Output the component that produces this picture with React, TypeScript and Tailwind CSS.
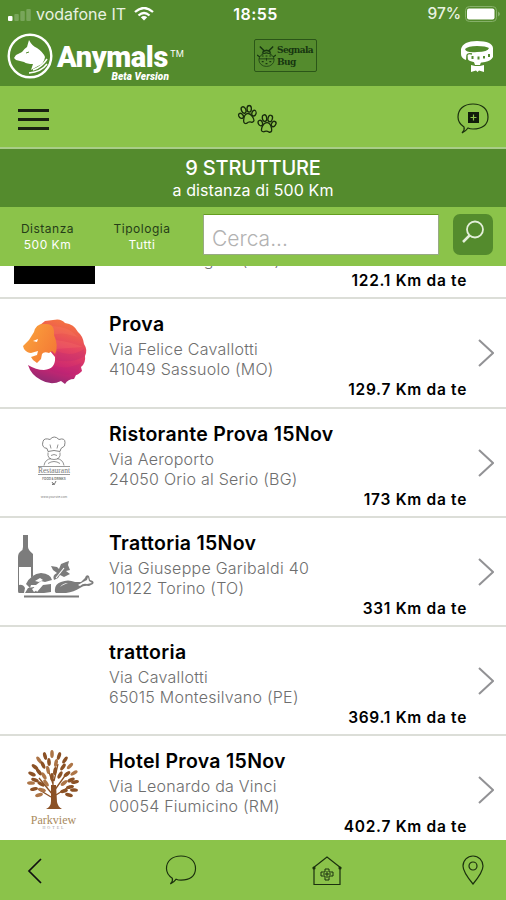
import React from "react";

type Place = {
	name: string;
	street: string;
	city: string;
	distance: string;
	thumb: React.ReactNode;
};

const LionLogo = () => (
	<svg viewBox="0 0 80 80" className="h-20 w-20">
		<defs>
			<linearGradient id="mane" x1="0.6" y1="0" x2="0.35" y2="1">
				<stop offset="0" stopColor="#f5743f" />
				<stop offset="0.4" stopColor="#e54462" />
				<stop offset="0.75" stopColor="#c92572" />
				<stop offset="1" stopColor="#8e2a72" />
			</linearGradient>
			<linearGradient id="face" x1="0" y1="0" x2="1" y2="0.6">
				<stop offset="0" stopColor="#fba63c" />
				<stop offset="1" stopColor="#f47b36" />
			</linearGradient>
		</defs>
		<path
			d="M26 12L31 8L39 7Q47 5 51 10Q60 11 64 19Q69 23 70 31Q74 37 71 43Q72 50 67 54L68 58Q64 62 62 62L60 66Q54 66 51 71L47 68Q37 73 27 67Q17 62 14 52Q22 57 30 57Q42 56 41 44L36 38Z"
			fill="url(#mane)"
		/>
		<path d="M43 38Q57 45 70 36L71 43Q58 51 42 47ZM41 53Q53 57 67 50L64 60Q50 64 36 57Z" fill="#a92478" opacity="0.2" />
		<path d="M38 13Q54 13 64 24L56 22Q48 19 38 22ZM42 27Q57 29 69 34Q55 35 42 36Z" fill="#ff896b" opacity="0.2" />
		<path
			d="M15 27L20 19Q22 10 31 11Q41 10 40 22Q45 33 41 41L38 38L35 40Q30 38 28 41L27 46L23 50L19 47L17 44L23 42L24 38L17 40Q13 40 10 36L9 33Z"
			fill="url(#face)"
		/>
		<path d="M19 28L24 26L23 29Z" fill="#fff" />
	</svg>
);

const ChefLogo = () => (
	<div className="flex h-20 w-20 flex-col items-center pt-[13px] text-[#777]">
		<svg viewBox="0 0 30 30" className="h-[31px] w-[30px] shrink-0" fill="none" stroke="currentColor">
			<path d="M8 12Q2 11 4 5Q5 1 11 3Q15 -2 20 3Q26 1 26 6Q27 10 22 12L21 15Q15 13 9 15Z" strokeWidth="0.9" />
			<path d="M11 8L12 12M19 8L18 12M9 16Q8 23 15 23Q22 23 21 16M12 19Q15 17 18 19M5 29Q6 23 12 22M25 29Q24 23 18 22M9 27Q15 23 21 27" strokeWidth="0.8" />
		</svg>
		<div className="-mt-px border-y border-[#999] font-['Liberation_Serif',serif] text-[7.5px] leading-[7px]">
			Restaurant
		</div>
		<div className="mt-[2px] whitespace-nowrap text-[3px] font-bold leading-[4px]">FOOD &amp; DRINKS</div>
		<svg viewBox="0 0 6 5" className="h-[5px] w-[6px]" fill="none" stroke="currentColor">
			<path d="M1 1L3 4L5 0M1 4L3 2" />
		</svg>
		<div className="mt-[9px] text-[3px] leading-[4px]">www.yoursite.com</div>
	</div>
);

const TrattoriaLogo = () => (
	<svg viewBox="0 0 80 80" className="h-20 w-20" fill="#7c7c7c">
		<path d="M9 3H14V15Q14 18 19 22V44L17 46V35H5V53Q9 52 11 56L10 61H5Q4 61 4 59V25Q4 21 7 19Q9 18 9 15Z" />
		<path d="M12 52Q17 42 27 41Q37 42 38 48L31 50L27 49L22 53L17 53L16 56ZM11 61L14 56L20 55L23 60L29 53L37 52V60L30 61H20Z" />
		<path d="M21 49L26 46L29 48L25 50ZM18 57L21 55L23 58L20 60Z" fill="#fff" />
		<path d="M40 48Q38 43 43 41L39 38L37 34L43 35L45 37L47 32L52 30L55 29L54 33L56 38L52 39L56 42L50 45L46 43L44 46Z" />
		<path d="M42 46L50 36" stroke="#fff" strokeWidth="1.2" />
		<path d="M41 60Q40 52 47 50Q54 47 61 50L67 50L71 46Q72 42 75 44L76 48Q81 49 79 52L75 54Q70 53 66 56Q60 60 52 61H42Z" />
		<path d="M69 50L73 48L74 45L75 49L78 51L73 52Q69 51 66 54L64 53ZM46 55Q49 51 54 51L49 53Z" fill="#fff" />
		<path d="M10 63.500H65V65.500H10Z" />
	</svg>
);

// leaves of the hotel tree, as [x, y, angle]
const leaves = [
	[38, 4, 0], [31, 6, -15], [45, 6, 18], [25, 10, -35], [51, 10, 35],
	[35, 12, -5], [42, 13, 12], [29, 15, -25], [49, 17, 35], [56, 16, 45],
	[21, 17, -50], [25, 22, -40], [34, 20, -10], [41, 21, 10], [53, 24, 50],
	[60, 23, 60], [18, 24, -65], [46, 25, 30], [30, 26, -30], [21, 30, -70],
	[57, 30, 65], [17, 33, -85], [61, 32, 80], [27, 34, -60], [50, 33, 50],
	[56, 37, 80], [20, 39, -100], [28, 40, -75], [60, 40, 95], [50, 41, 75],
	[25, 45, -105], [55, 45, 105], [38, 27, 0], [32, 33, -35],
];

const HotelLogo = () => (
	<div className="flex h-20 w-20 flex-col items-center">
		<svg viewBox="0 0 80 64" className="h-16 w-20 shrink-0" fill="#8b5125">
			<path
				d="M39 58V29M39 45L25 28M40 41L53 23M39 34L33 16M40 31L44 14M37 47L24 39M42 45L56 36"
				stroke="#8b5125"
				strokeWidth="1.3"
				fill="none"
			/>
			<path d="M37 35H42L43 52Q44 57 48 59H32Q37 57 37 51Z" />
			{leaves.map(([x, y, angle], i) => (
				<ellipse key={i} cx={x} cy={y} rx="1.800" ry="4" transform={`rotate(${angle} ${x} ${y})`} fill={i % 3 ? "#8b5125" : "#ad7547"} />
			))}
		</svg>
		<div className="pr-px font-['Liberation_Serif',serif] text-[12px] leading-[12px] text-[#a98a5d]">
			Parkview
		</div>
		<div className="font-['Liberation_Serif',serif] text-[4px] leading-[4px] tracking-[2px] text-[#999]">
			HOTEL
		</div>
	</div>
);

const places: Place[] = [
	// scrolled almost out of view under the filter bar
	{ name: "", street: "", city: "41043 Formigine (MO)", distance: "122.1", thumb: <div className="h-20 w-[81px] bg-black" /> },
	{ name: "Prova", street: "Via Felice Cavallotti", city: "41049 Sassuolo (MO)", distance: "129.7", thumb: <LionLogo /> },
	{ name: "Ristorante Prova 15Nov", street: "Via Aeroporto", city: "24050 Orio al Serio (BG)", distance: "173", thumb: <ChefLogo /> },
	{ name: "Trattoria 15Nov", street: "Via Giuseppe Garibaldi 40", city: "10122 Torino (TO)", distance: "331", thumb: <TrattoriaLogo /> },
	{ name: "trattoria", street: "Via Cavallotti", city: "65015 Montesilvano (PE)", distance: "369.1", thumb: null },
	{ name: "Hotel Prova 15Nov", street: "Via Leonardo da Vinci", city: "00054 Fiumicino (RM)", distance: "402.7", thumb: <HotelLogo /> },
];

const PlaceRow = ({ place }: { place: Place }) => (
	<li className="flex h-[109.25px] shrink-0 border-b-2 border-[#dcded8] pl-[14px] pr-3">
		<div className="w-[95px] shrink-0 pt-[14px]">{place.thumb}</div>
		<div className="w-[358px] shrink-0 pt-[13px]">
			<h2 className="min-h-6 text-[19.5px] font-semibold leading-6 tracking-[0.3px] text-black">{place.name}</h2>
			<p className="mt-[3px] min-h-5 text-base font-light leading-5 tracking-[0.25px] text-[#6e6e6e]">{place.street}</p>
			<p className="text-base font-light leading-5 tracking-[0.25px] text-[#6e6e6e]">{place.city}</p>
			<p className="mt-px text-right text-[15.5px] font-semibold leading-5 tracking-[0.7px] text-black">
				{place.distance} Km da te
			</p>
		</div>
		<svg viewBox="0 0 16 28" className="ml-auto mt-10 h-7 w-4" fill="none" stroke="#929295" strokeWidth="2">
			<path d="M1 1L15 14L1 27" />
		</svg>
	</li>
);

const StatusBar = () => (
	<div className="grid h-7 grid-cols-3 items-center pl-2 pr-[5px] text-[16px] font-medium text-[#e9f2e1]">
		<div className="flex items-center">
			<svg viewBox="0 0 23 14" className="mt-px h-[14px] w-[23px]" fill="#78a55a">
				<rect x="0" y="8" width="4.5" height="5" rx="1" fill="#fff" />
				<rect x="6.3" y="6" width="4.5" height="7" rx="1" />
				<rect x="12.3" y="3" width="4.5" height="10" rx="1" />
				<rect x="18.3" y="1" width="4.5" height="12" rx="1" />
			</svg>
			<span className="ml-[5px] whitespace-nowrap font-normal">vodafone IT</span>
			<svg viewBox="0 0 20 14" className="ml-2 h-[14px] w-5 shrink-0" fill="none" stroke="#fff" strokeWidth="2.3">
				<path d="M1 5Q10 -3 19 5M4.5 8.5Q10 3.5 15.5 8.5" />
				<path d="M10 13.5L6.8 10.3Q10 7.6 13.2 10.3Z" fill="#fff" stroke="none" />
			</svg>
		</div>
		<div className="pl-[2px] text-center font-semibold tracking-[0.5px] text-white">18:55</div>
		<div className="flex items-center justify-end gap-1">
			<span className="text-[15.5px] tracking-[-0.1px]">97%</span>
			<svg viewBox="0 0 36 16" className="h-4 w-9">
				<rect x="0.5" y="0.5" width="31" height="15" rx="4" fill="none" stroke="#86b069" />
				<rect x="2" y="2.5" width="27.500" height="11" rx="2" fill="#fff" />
				<path d="M33 5.5Q37 8 33 10.5Z" fill="#86b069" />
			</svg>
		</div>
	</div>
);

const Brand = () => (
	<div className="flex items-start">
		<svg viewBox="0 0 46 46" className="mt-[5px] h-[46px] w-[46px] shrink-0">
			<circle cx="23" cy="23" r="21.3" fill="none" stroke="#fff" strokeWidth="2.4" />
			<path d="M22 7Q25 13 30 15Q36 19 38 24Q37 31 31 33L24 37L26 31Q20 31 17 29L9 27L7 25L9 22L15 19Q17 16 20 14Z" fill="#fff" />
			<path d="M26 37Q35 34 40 26M22 40Q34 39 40 31" fill="none" stroke="#fff" strokeWidth="1.5" />
			<path d="M19 20L22 19" stroke="#548b2d" />
		</svg>
		<div className="ml-1 mt-3 flex flex-col text-white">
			<div className="flex h-[31px]">
				<span className="w-[113px] font-['Roboto',sans-serif] text-[29px] font-black leading-[35px] tracking-[-0.4px]">Anymals</span>
				<span className="mt-[8px] text-[9px] leading-3">TM</span>
			</div>
			<span className="w-[112px] text-right font-['Roboto',sans-serif] text-[10px] font-black italic leading-3 tracking-[0.1px]">
				Beta Version
			</span>
		</div>
	</div>
);

const BugButton = () => (
	<button className="mt-[11px] flex h-[33px] w-[63px] items-center rounded-[2px] border-[1.5px] border-[#2b5618] pl-[2px] text-[#173610]">
		<svg viewBox="0 0 20 26" className="h-[26px] w-[19px] shrink-0" fill="none" stroke="currentColor">
			<path d="M4 4L7 7L6 10M16 4L13 7L14 10M7 8L10 7L13 8M3 3L5 5M17 3L15 5" strokeWidth="1.5" />
			<ellipse cx="10" cy="17" rx="8" ry="7" strokeWidth="0.8" />
			<path d="M5 11Q10 8 15 11M2 16H18M10 15V18" strokeWidth="0.9" />
			<path d="M5 13H7M9 13H11M13 13H15M5 19H7M9 21H11M13 19H15M0 12L3 14M20 12L17 14" strokeWidth="1.3" />
		</svg>
		<span className="ml-px text-left font-['DejaVu_Serif_Condensed','DejaVu_Serif',serif] text-[10px] font-bold leading-[12px] tracking-[-0.6px]">
			Segnala
			<br />
			Bug
		</span>
	</button>
);

const CollarIcon = () => (
	<svg viewBox="0 0 34 34" className="mt-[12px] h-[34px] w-[34px]">
		<path
			d="M1 9Q3 1 17 1Q32 1 33 8V17Q31 21 25 22Q17 24 10 21Q7 20 7 15L6 20Q1 18 1 14ZM5 9Q6 13 17 12Q28 12 29 8Q26 6 17 6Q8 6 5 9Z"
			fill="#fff"
			fillRule="evenodd"
		/>
		<path d="M7 21V15Q8 13 12 14" fill="none" stroke="#548b2d" strokeWidth="1.3" />
		<path d="M12.500 16V19M18.500 16.500V19.500M24 16V18.500M29 14V17" stroke="#548b2d" strokeWidth="2" />
		<path d="M11 25L15 26H20L24 25V32L19 30.500L17.500 32L16 30.500L11 32Z" fill="#fff" />
		<path d="M14 22H21L20 25H15Z" fill="#fff" />
	</svg>
);

const Paw = ({ className }: { className: string }) => (
	<svg viewBox="0 0 20 20" className={className} fill="none" stroke="#182b0c" strokeWidth="1.4">
		<ellipse cx="7" cy="4.500" rx="2.3" ry="3.5" transform="rotate(-12 7 4.5)" />
		<ellipse cx="13" cy="4.500" rx="2.3" ry="3.5" transform="rotate(12 13 4.5)" />
		<ellipse cx="3" cy="10" rx="2.2" ry="3" transform="rotate(-30 3 10)" />
		<ellipse cx="17" cy="10" rx="2.2" ry="3" transform="rotate(30 17 10)" />
		<path d="M10 9Q13 9 14.500 13Q17 19 13 19Q10 17 7 19Q3 19 5.500 13Q7 9 10 9Z" />
	</svg>
);

const Bubble = ({ className, plus }: { className: string; plus?: boolean }) => (
	<svg viewBox="0 0 32 31" className={className} fill="none" stroke="#1b300e" strokeWidth="1.2">
		<path d="M7 24Q1 20 1 14C1 6 7 1 16 1S31 6 31 14S25 26 16 26Q13 26 11 25Q9 28 5 30Q8 27 7 24Z" />
		{plus && <path d="M11 9H22V20H11Z" fill="#111b0b" stroke="none" />}
		{plus && <path d="M16.5 11.500V17.500M13.500 14.5H19.500" stroke="#8bc34a" />}
	</svg>
);

const BottomNav = () => (
	<nav className="flex h-[60px] shrink-0 items-center justify-between bg-[#8bc34a] pl-[27px] pr-[22px]">
		<svg viewBox="0 0 16 28" className="h-7 w-4 translate-y-[1px]" fill="none" stroke="#111" strokeWidth="1.7">
			<path d="M14 2L2 14L14 26" />
		</svg>
		<Bubble className="ml-[46px] h-[30px] w-8" />
		<svg viewBox="0 0 30 31" className="ml-[38px] h-[31px] w-[30px]" fill="none" stroke="#1b300e" strokeWidth="1.2">
			<path d="M1 13L15 2L29 13M2 12V29.500H28V12" />
			<path d="M13 14H17V17H21V21H17V25H13V21H9V17H13ZM15 16V23M11 19H19" strokeWidth="1" />
			<circle cx="2" cy="13" r="1" fill="#1b300e" />
			<circle cx="28" cy="13" r="1" fill="#1b300e" />
		</svg>
		<svg viewBox="0 0 22 30" className="ml-[44px] h-[30px] w-[22px]" fill="none" stroke="#1b300e" strokeWidth="1.2">
			<path d="M11 29Q1 17 1 11A10 10 0 0 1 21 11Q21 17 11 29Z" />
			<circle cx="11" cy="11" r="4" />
		</svg>
	</nav>
);

export default function App() {
	return (
		<div className="flex h-[900px] w-[506px] flex-col overflow-hidden bg-white font-['Inter',sans-serif]">
			<header className="h-[86px] shrink-0 bg-[#548b2d]">
				<StatusBar />
				<div className="grid grid-cols-[247px_1fr_40px] pl-[7px] pr-[6px]">
					<Brand />
					<BugButton />
					<CollarIcon />
				</div>
			</header>

			<div className="flex h-[63px] shrink-0 items-center justify-between border-b-2 border-[#a9cd88] bg-[#8bc34a] pl-[18px] pr-[17px]">
				<div className="mt-[5px] flex w-[31px] flex-col gap-[6px]">
					<div className="h-[3px] bg-[#182211]" />
					<div className="h-[3px] bg-[#182211]" />
					<div className="h-[3px] bg-[#182211]" />
				</div>
				<div className="ml-[8px] mt-[5px] flex items-start">
					<Paw className="h-[19px] w-[19px] -rotate-[12deg]" />
					<Paw className="mt-[9px] h-[19px] w-5 rotate-[4deg]" />
				</div>
				<Bubble plus className="mt-[4px] h-[31px] w-8" />
			</div>

			<div className="h-[58px] shrink-0 bg-[#548b2d] pt-[7px] text-center text-white">
				<h1 className="text-xl font-medium leading-6 tracking-[-0.2px]">9 STRUTTURE</h1>
				<p className="text-base leading-5 tracking-[0.1px]">a distanza di 500 Km</p>
			</div>

			<div className="flex h-[59px] shrink-0 bg-[#8bc34a]">
				<div className="w-[95px] pt-[14px] text-center text-[12px] leading-4 tracking-[0.5px]">
					<p className="text-[#263d18]">Distanza</p>
					<p className="text-white">500 Km</p>
				</div>
				<div className="w-[94px] pt-[14px] text-center text-[12px] leading-4 tracking-[0.5px]">
					<p className="text-[#263d18]">Tipologia</p>
					<p className="text-white">Tutti</p>
				</div>
				<input
					placeholder="Cerca..."
					className="ml-[14px] mt-[7px] h-[41px] w-[236px] rounded-none border border-[#98aa84] border-t-[#659e1f] bg-white pl-2 pt-[7px] text-[21px] font-light placeholder:text-[#b2b2b2]"
				/>
				<button className="ml-[14px] mt-[7px] flex h-[41px] w-10 items-center justify-center rounded-[7px] bg-[#548b2d]">
					<svg viewBox="0 0 24 24" className="-mt-[5px] h-6 w-6" fill="none" stroke="#e4efda" strokeWidth="1.8">
						<circle cx="14" cy="9.5" r="8" />
						<path d="M8.5 15.5L2 22" strokeWidth="2.5" />
					</svg>
				</button>
			</div>

			<main className="flex h-[574px] shrink-0 flex-col overflow-hidden">
				<ul className="-mt-[76px] flex flex-col">
					{places.map((place, i) => (
						<PlaceRow key={i} place={place} />
					))}
				</ul>
			</main>

			<BottomNav />
		</div>
	);
}
